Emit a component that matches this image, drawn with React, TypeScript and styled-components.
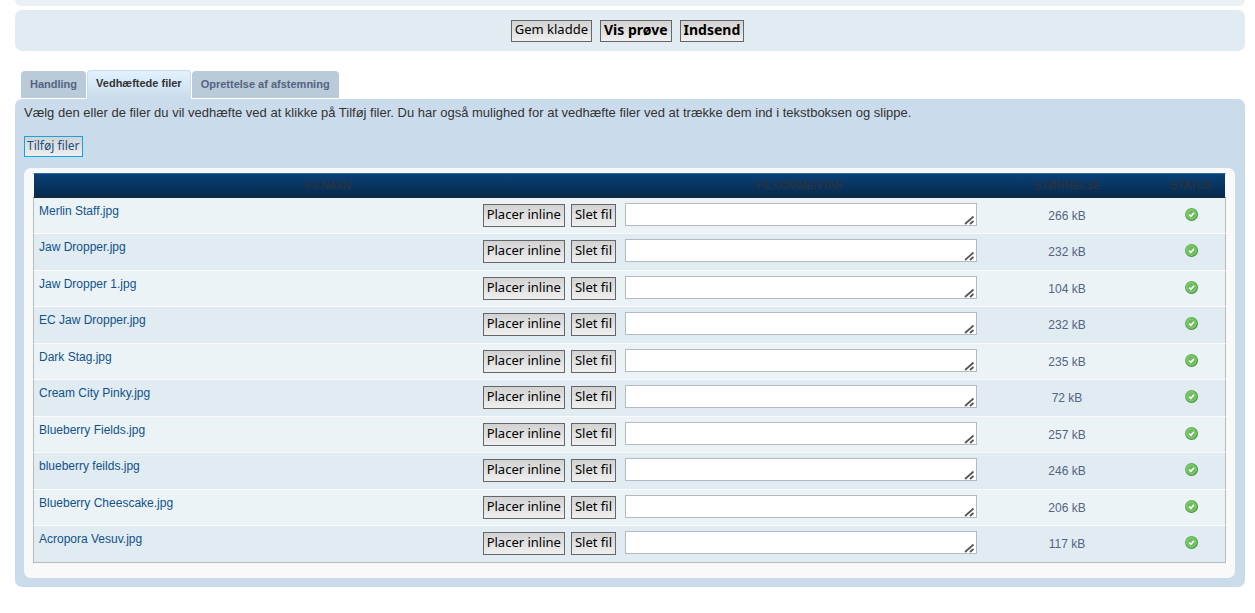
import React from "react";
import styled, { createGlobalStyle } from "styled-components";

const GlobalStyle = createGlobalStyle`
  * { box-sizing: border-box; }
  body {
    margin: 0;
    background: #fff;
    color: #536482;
    font-family: "Liberation Sans", Arial, sans-serif;
    font-size: 12px;
    line-height: 16px;
  }
`;

const Page = styled.main`
  padding: 0 10px 24px 15px;
`;

const PanelEnd = styled.div`
  height: 6px;
  border-radius: 0 0 7px 7px;
  background: #ebf0f4;
`;

const SubmitBar = styled.div`
  display: flex;
  justify-content: center;
  align-items: flex-start;
  gap: 8px;
  margin-top: 4px;
  padding: 10px 5px 9px 0;
  border-radius: 7px;
  background: #e1ebf2;
`;

const Button = styled.button<{ $strong?: boolean }>`
  height: 22px;
  margin: 0;
  padding: 0 3px 3px;
  border: 1px solid #666;
  border-radius: 0;
  background: linear-gradient(#d2d2d2, #efefef);
  color: #000;
  font-family: "Noto Sans", "Open Sans", sans-serif;
  font-size: ${(p) => (p.$strong ? 14 : 13)}px;
  font-weight: ${(p) => (p.$strong ? 700 : 400)};
  line-height: 17px;
  white-space: nowrap;
`;

const FileButton = styled(Button)`
  height: 23px;
`;

const AddButton = styled(Button)`
  display: block;
  height: 21px;
  margin: 15px 0 11px;
  padding: 0 2px 2px;
  border-color: #0ea5e9;
  color: #105289;
  font-size: 12px;
`;

const Tabs = styled.nav`
  display: flex;
  align-items: flex-end;
  gap: 1px;
  height: 29px;
  margin: 19px 0 0 6px;
`;

const Tab = styled.a<{ $active?: boolean }>`
  height: ${(p) => (p.$active ? 29 : 27)}px;
  margin-bottom: ${(p) => (p.$active ? 0 : 1)}px;
  padding: ${(p) => (p.$active ? "4px 8px 0" : "5px 9px 0")};
  border: ${(p) => (p.$active ? "1px solid #cadceb" : "0")};
  border-bottom: 0;
  border-radius: 4px 4px 0 0;
  background: ${(p) => (p.$active ? "linear-gradient(#e2f2ff, #cadceb)" : "#bacad8")};
  color: ${(p) => (p.$active ? "#333" : "#536482")};
  font-size: 11px;
  font-weight: 700;
  text-decoration: none;
  white-space: nowrap;
`;

const Panel = styled.section`
  padding: 5px 10px 9px 9px;
  border-radius: 7px;
  background: #cadceb;
`;

const Intro = styled.p`
  margin: 0;
  color: #333;
  font-size: 13px;
  line-height: 17px;
`;

const FileBox = styled.div`
  padding: 5px 9px 15px;
  border-radius: 7px;
  background: #f9f9f9;
`;

const FileTable = styled.table`
  width: 100%;
  table-layout: fixed;
  border-collapse: separate;
  border-spacing: 0;
`;

const Column = styled.col<{ $width?: number }>`
  width: ${(p) => (p.$width ? `${p.$width}px` : "auto")};
`;

const HeadRow = styled.tr`
  height: 25px;
  background: linear-gradient(#0a4078, #06294a);
`;

const HeadCell = styled.th`
  padding: 0 0 2px;
  border-top: 1px solid #2f6aa3;
  border-bottom: 1px solid #1f2a36;
  color: #333;
  font-size: 11px;
  font-weight: 400;
  line-height: 14px;
  text-transform: uppercase;

  &:first-child {
    border-left: 1px solid #f9f9f9;
  }
  &:last-child {
    border-right: 1px solid #f9f9f9;
  }
`;

const Row = styled.tr`
  height: 36px;
  background: #ecf3f7;

  &:nth-child(even) {
    height: 37px;
    background: #e1ebf2;
  }
`;

const Cell = styled.td`
  padding: 5px 0 0;
  border-bottom: 1px solid #fafafa;
  text-align: center;
  vertical-align: top;

  &:first-child {
    border-left: 1px solid #b4bac0;
  }
  &:last-child {
    border-right: 1px solid #b4bac0;
  }
  ${Row}:last-child & {
    border-bottom-color: #b4bac0;
  }
`;

const FileEntry = styled.div`
  display: flex;
  align-items: flex-start;
  gap: 6px;
  padding: 1px 6px 0 5px;
`;

const FileLink = styled.a`
  margin-right: auto;
  color: #105289;
  line-height: 14px;
  text-decoration: none;
`;

const CommentField = styled.div`
  position: relative;
  margin-left: 3px;
`;

const Comment = styled.textarea`
  display: block;
  width: 100%;
  height: 23px;
  padding: 2px;
  border: 1px solid #b4bac0;
  border-radius: 0;
  background: #fff;
  resize: none;
  overflow: hidden;
  font: 13px/17px "Liberation Sans", Arial, sans-serif;
`;

const Grip = styled.svg`
  position: absolute;
  right: 2px;
  bottom: 1px;
  pointer-events: none;
`;

const Size = styled.span`
  display: block;
  padding-top: 5px;
`;

const StatusIcon = styled.svg`
  display: block;
  margin: 5px auto 0;
`;

const files = [
  ["Merlin Staff.jpg", "266 kB"],
  ["Jaw Dropper.jpg", "232 kB"],
  ["Jaw Dropper 1.jpg", "104 kB"],
  ["EC Jaw Dropper.jpg", "232 kB"],
  ["Dark Stag.jpg", "235 kB"],
  ["Cream City Pinky.jpg", "72 kB"],
  ["Blueberry Fields.jpg", "257 kB"],
  ["blueberry feilds.jpg", "246 kB"],
  ["Blueberry Cheescake.jpg", "206 kB"],
  ["Acropora Vesuv.jpg", "117 kB"],
];

function Uploaded() {
  return (
    <StatusIcon width="13" height="13" viewBox="0 0 13 13" role="img" aria-label="Uploadet">
      <defs>
        <linearGradient id="rim" x1="0" y1="0" x2="1" y2="1">
          <stop offset="0" stopColor="#6cc35c" />
          <stop offset="1" stopColor="#35852f" />
        </linearGradient>
      </defs>
      <circle cx="6.5" cy="6.5" r="6.5" fill="url(#rim)" />
      <circle cx="6.5" cy="6.5" r="4.8" fill="#6cbd5c" stroke="#96d585" strokeWidth="0.9" />
      <path d="M4.1 6.6 5.9 8.3 9 4.8" fill="none" stroke="#fff" strokeWidth="1.6" />
    </StatusIcon>
  );
}

export default function App() {
  return (
    <>
      <GlobalStyle />
      <Page>
        <PanelEnd />
        <SubmitBar>
          <Button type="button">Gem kladde</Button>
          <Button type="button" $strong>Vis prøve</Button>
          <Button type="submit" $strong>Indsend</Button>
        </SubmitBar>
        <Tabs>
          <Tab href="#handling">Handling</Tab>
          <Tab href="#filer" $active>Vedhæftede filer</Tab>
          <Tab href="#afstemning">Oprettelse af afstemning</Tab>
        </Tabs>
        <Panel id="filer">
          <Intro>
            Vælg den eller de filer du vil vedhæfte ved at klikke på Tilføj filer. Du har også mulighed for at
            vedhæfte filer ved at trække dem ind i tekstboksen og slippe.
          </Intro>
          <AddButton type="button">Tilføj filer</AddButton>
          <FileBox>
            <FileTable>
              <colgroup>
                <Column />
                <Column $width={355} />
                <Column $width={180} />
                <Column $width={69} />
              </colgroup>
              <thead>
                <HeadRow>
                  <HeadCell scope="col">Filnavn</HeadCell>
                  <HeadCell scope="col">Filkommentar</HeadCell>
                  <HeadCell scope="col">Størrelse</HeadCell>
                  <HeadCell scope="col">Status</HeadCell>
                </HeadRow>
              </thead>
              <tbody>
                {files.map(([name, size]) => (
                  <Row key={name}>
                    <Cell>
                      <FileEntry>
                        <FileLink href="#fil">{name}</FileLink>
                        <FileButton type="button">Placer inline</FileButton>
                        <FileButton type="button">Slet fil</FileButton>
                      </FileEntry>
                    </Cell>
                    <Cell>
                      <CommentField>
                        <Comment rows={1} aria-label={`Filkommentar til ${name}`} />
                        <Grip width="11" height="11" viewBox="0 0 11 11" aria-hidden="true">
                          <path d="M1 10 9.5 2.5M6 10l3.5-3" fill="none" stroke="#555" strokeWidth="1.7" />
                        </Grip>
                      </CommentField>
                    </Cell>
                    <Cell><Size>{size}</Size></Cell>
                    <Cell><Uploaded /></Cell>
                  </Row>
                ))}
              </tbody>
            </FileTable>
          </FileBox>
        </Panel>
      </Page>
    </>
  );
}
